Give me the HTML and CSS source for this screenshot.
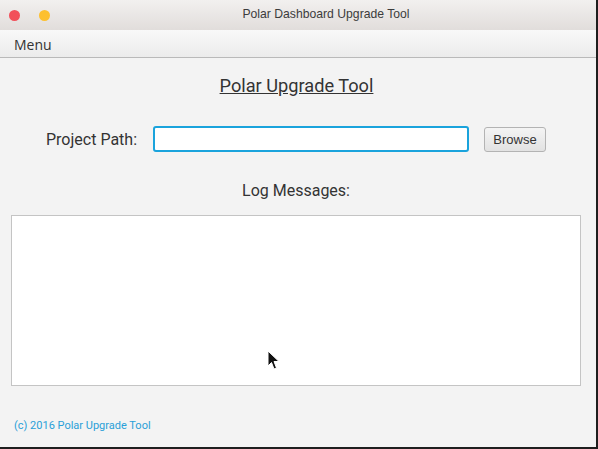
FILE: index.html
```html
<!DOCTYPE html>
<html>
<head>
<meta charset="utf-8">
<link rel="stylesheet" href="styles.css">
</head>
<body>
<div class="window">
  <div class="titlebar">
    <div class="lights">
      <span class="light red"></span>
      <span class="light yellow"></span>
    </div>
    <div class="title">Polar Dashboard Upgrade Tool</div>
  </div>
  <div class="menubar"><span class="menu">Menu</span></div>
  <div class="content">
    <h1 class="heading">Polar Upgrade Tool</h1>
    <div class="path-row">
      <label class="path-label">Project Path:</label>
      <input class="path-input" type="text">
      <button class="browse">Browse</button>
    </div>
    <div class="log-label">Log Messages:</div>
    <div class="log-box">
      <svg class="cursor" width="14" height="22" viewBox="0 0 14 22"><path d="M1 1 L1 16 L4.5 12.5 L7 19 L9.5 18 L7 11.5 L12 11.5 Z" fill="#111" stroke="#fff" stroke-width="1"/></svg>
    </div>
    <div class="footer">(c) 2016 Polar Upgrade Tool</div>
  </div>
</div>
</body>
</html>
```
FILE: styles.css
```css
html, body {
  margin: 0;
  padding: 0;
  width: 598px;
  height: 449px;
  overflow: hidden;
  background: #1e1e1e;
}
.window {
  width: 596px;
  height: 447px;
  display: flex;
  flex-direction: column;
  background: #f3f3f3;
  font-family: Roboto, "Liberation Sans", sans-serif;
  color: #333;
}
.titlebar {
  height: 30px;
  background: linear-gradient(#f2f0ef, #e1dddb);
  display: flex;
  align-items: center;
  position: relative;
}
.lights {
  display: flex;
  gap: 19px;
  padding-left: 9px;
}
.light {
  width: 11px;
  height: 11px;
  border-radius: 50%;
  display: block;
}
.red { background: #f2505a; }
.yellow { background: #fdc02f; }
.title {
  position: absolute;
  left: 0;
  right: 0;
  top: 7px;
  text-align: center;
  padding-left: 56px;
  font-family: "Liberation Sans", Arial, sans-serif;
  font-size: 12.2px;
  color: #3c3c3c;
}
.menubar {
  height: 28px;
  box-sizing: border-box;
  background: linear-gradient(#f9f9f9, #ebebeb);
  border-bottom: 1px solid #b9b9b9;
  display: flex;
  align-items: center;
  padding-left: 14px;
}
.menu {
  font-family: "Open Sans", sans-serif;
  font-size: 14px;
  color: #333;
  padding-top: 2px;
}
.content {
  flex: 1;
  display: flex;
  flex-direction: column;
  padding: 0 15px 0 11px;
}
.heading {
  margin: 17px 0 0;
  text-align: center;
  font-size: 18.2px;
  font-weight: 400;
  text-decoration: underline;
  line-height: 22px;
  padding-left: 1px;
  color: #333;
}
.path-row {
  display: flex;
  align-items: center;
  margin-top: 29px;
  height: 26px;
}
.path-label {
  font-size: 16px;
  margin-left: 35px;
  width: 107px;
  color: #333;
}
.path-input {
  width: 316px;
  height: 26px;
  box-sizing: border-box;
  border: 2px solid #1aa3dc;
  border-radius: 3px;
  background: #fff;
  outline: none;
  margin: 0;
}
.browse {
  margin-left: 15px;
  width: 62px;
  height: 25px;
  box-sizing: border-box;
  border: 1px solid #b3b3b3;
  border-radius: 3px;
  background: linear-gradient(#f4f4f4, #e2e2e2);
  font-family: "Liberation Sans", Arial, sans-serif;
  font-size: 13px;
  color: #333;
  padding: 0;
}
.log-label {
  margin-top: 29px;
  text-align: center;
  font-size: 16px;
  line-height: 20px;
  padding-left: 0;
}
.log-box {
  margin-top: 14px;
  width: 570px;
  height: 171px;
  box-sizing: border-box;
  border: 1px solid #c4c4c4;
  background: #fff;
  position: relative;
}
.cursor {
  position: absolute;
  left: 255px;
  top: 134px;
}
.footer {
  margin-top: 33px;
  margin-left: 3px;
  font-size: 11px;
  color: #2aa0d8;
}
```
